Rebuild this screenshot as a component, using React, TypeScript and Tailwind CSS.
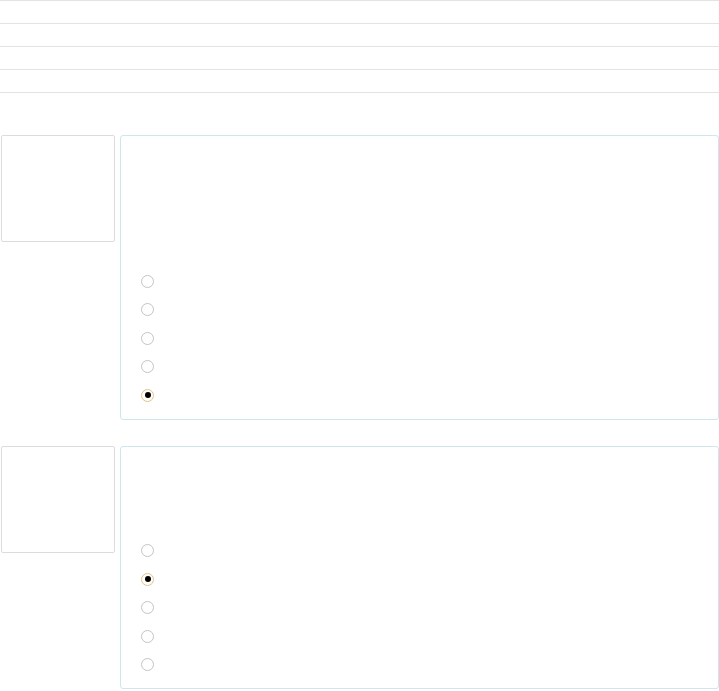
export default function App() {
  const questions = [
    { top: 'h-[131px]', checked: 4 },
    { top: 'h-[90px]', checked: 1 },
  ];

  return (
    <div className="w-[719px] bg-white font-['Liberation_Sans',sans-serif]">
      {/* header rows */}
      <div className="flex flex-col">
        {[0, 1, 2, 3].map((i) => (
          <div key={i} className="h-[23px] border-t border-[#e3e3e3]" />
        ))}
        <div className="border-t border-[#e3e3e3]" />
      </div>

      <div className="mt-[42px] flex flex-col gap-[26px]">
        {questions.map((q, qi) => (
          <div key={qi} className="flex items-start">
            <div className="ml-px h-[107px] w-[114px] rounded-[2px] border border-[#dcdcdc]" />
            <div className="ml-[5px] flex-1 rounded-[3px] border border-[#cfe6ee] pb-[9px] pl-[20px]">
              <div className={q.top} />
              <div className="flex flex-col">
                {[0, 1, 2, 3, 4].map((r) => (
                  <div key={r} className="flex h-[28.5px] items-center">
                    {r === q.checked ? (
                      <span className="flex h-[13px] w-[13px] items-center justify-center rounded-full border-[1.5px] border-[#dcc597] bg-[#fffdf6]">
                        <span className="h-[6px] w-[6px] rounded-full bg-black" />
                      </span>
                    ) : (
                      <span className="h-[13px] w-[13px] rounded-full border border-[#c4c4c4] bg-white" />
                    )}
                  </div>
                ))}
              </div>
            </div>
          </div>
        ))}
      </div>
    </div>
  );
}
